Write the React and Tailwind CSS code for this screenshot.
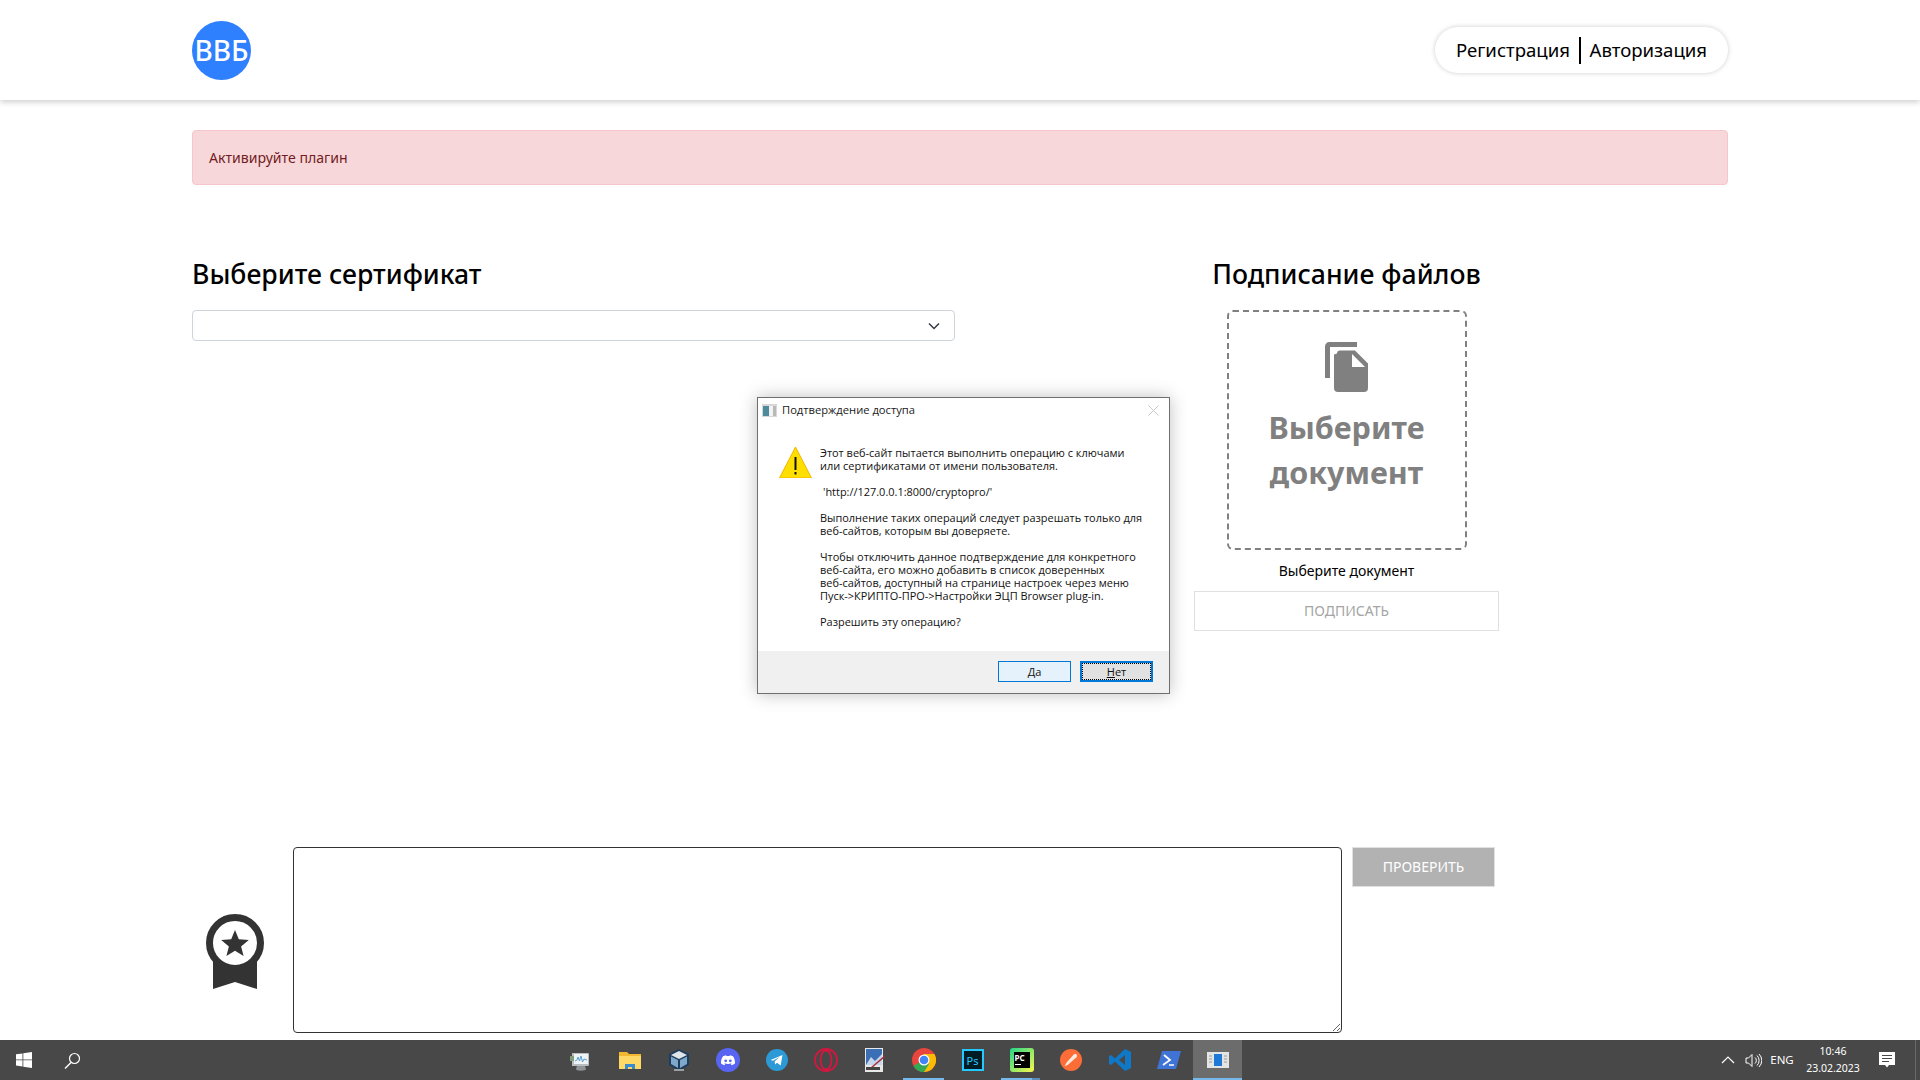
import React from "react";

const font = { fontFamily: '"Noto Sans", "Open Sans", sans-serif' };

function DocIcon() {
  return (
    <svg width="43" height="50" viewBox="0 0 43 50" className="block">
      <path d="M2.5 36V4.5a2 2 0 0 1 2-2H32" fill="none" stroke="#808080" strokeWidth="5" />
      <path d="M12 11.5a3 3 0 0 1 3-3h15L43 21.5V46a4 4 0 0 1-4 4H13a4 4 0 0 1-4-4V12.500z" fill="#808080" />
      <path d="M27 13V26H40z" fill="#fff" transform="translate(0,-1)" />
    </svg>
  );
}

function Badge() {
  return (
    <svg width="58" height="76" viewBox="0 0 58 76" className="block">
      <path d="M7 40V75L29 68L51 75V40z" fill="#333" />
      <circle cx="29" cy="29" r="25.500" fill="#fff" stroke="#333" strokeWidth="7" />
      <path d="M29 16l3.800 9.300 10 .7-7.700 6.400 2.500 9.700L29 36.800l-8.600 5.300 2.500-9.700-7.700-6.400 10-.7z" fill="#333" />
    </svg>
  );
}

function Tile({ active, bar, bar2, children }) {
  return (
    <div className={`relative w-[49px] shrink-0 h-10 flex items-center justify-center ${active ? "bg-[#6c6c6c]" : ""}`}>
      {children}
      {bar && <div className={`absolute bottom-0 h-[2px] bg-[#76b9ed] ${active ? "left-0 right-0" : bar2 ? "left-[4px] w-[31px]" : "left-[4px] w-[41px]"}`} />}
      {bar2 && <div className="absolute bottom-0 left-[35px] w-[8px] h-[2px] bg-[#5b8fb8]" />}
    </div>
  );
}

const S = ({ w = 24, h = 24, vb = "0 0 24 24", children }) => (
  <svg width={w} height={h} viewBox={vb} className="block">{children}</svg>
);

function Icons() {
  return (
    <div className="flex shrink-0 ml-[460px]">
      <Tile>
        <S>
          <path d="M3 5h16a1 1 0 0 1 1 1v11a1 1 0 0 1-1 1H3z" fill="#b9bdc0" />
          <rect x="5" y="6" width="14" height="10" fill="#eef3f6" />
          <path d="M6 13l2-1 1-3 1.500 4 1.500-5 1.500 6 1.500-3 3 1" fill="none" stroke="#5c9fd0" strokeWidth="1" />
          <path d="M8 18h8l1 3a3 1 0 0 1-10 0z" fill="#8e9396" />
          <rect x="1" y="8" width="4" height="5" fill="#7d9c77" />
        </S>
      </Tile>
      <Tile>
        <S>
          <path d="M1 4h8l2 2h12v15H1z" fill="#f2b930" />
          <rect x="1" y="8" width="22" height="13" fill="#ffd966" />
          <path d="M7 21v-5h10v5h-3v-2h-4v2z" fill="#3a8bd0" />
        </S>
      </Tile>
      <Tile>
        <S>
          <path d="M12 1l10 5v11l-10 6-10-6V6z" fill="#1f3c5c" />
          <path d="M12 3l8 4-8 4-8-4z" fill="#dfe5ea" />
          <path d="M4 8.500l7 3.500v8l-7-4zM20 8.500l-7 3.500v8l7-4z" fill="#7ea8cb" />
          <path d="M12 11v9" stroke="#1f3c5c" strokeWidth="2" />
          <rect x="7" y="21" width="10" height="2" fill="#9aa0a4" />
        </S>
      </Tile>
      <Tile>
        <S>
          <circle cx="12" cy="12" r="12" fill="#5865f2" />
          <path d="M7 8.200c1-.5 2-.8 3-1l.400.8c1-.1 2.200-.1 3.200 0l.400-.8c1 .2 2 .5 3 1 1.500 2.300 2.200 4.700 2 7.300-1.100.8-2.200 1.300-3.400 1.700l-.8-1.200.9-.5-.4-.3c-1.800.9-4.800.9-6.600 0l-.4.300.9.500-.8 1.200c-1.200-.4-2.300-.9-3.400-1.700-.2-2.600.5-5 2-7.300z" fill="#fff" />
          <circle cx="9.700" cy="12.800" r="1.400" fill="#5865f2" />
          <circle cx="14.300" cy="12.800" r="1.400" fill="#5865f2" />
        </S>
      </Tile>
      <Tile>
        <S w={22} h={22}>
          <circle cx="12" cy="12" r="12" fill="#2b9ad6" />
          <path d="M5 12l13-5.500-2 11.500-4-3-2 2-.6-3.500 5.600-5-7.200 4.300z" fill="#fff" />
        </S>
      </Tile>
      <Tile>
        <S>
          <ellipse cx="12" cy="12" rx="11" ry="11" fill="none" stroke="#d3173f" strokeWidth="1.800" />
          <ellipse cx="12" cy="12" rx="5.500" ry="9.500" fill="none" stroke="#d3173f" strokeWidth="1.800" />
        </S>
      </Tile>
      <Tile>
        <S w={20} h={24} vb="0 0 20 24">
          <rect width="18" height="24" fill="#e8e8e8" />
          <rect x="1" y="1" width="16" height="16" fill="#3b6fb5" />
          <path d="M1 17l5-8 4 4 7-7v11z" fill="#c6d6ea" />
          <path d="M20 8L6 20" stroke="#a52a3a" strokeWidth="1.500" />
          <rect x="1" y="19" width="14" height="3" fill="#444" />
        </S>
      </Tile>
      <Tile bar>
        <S>
          <circle cx="12" cy="12" r="12" fill="#e8453c" />
          <path d="M12 12L1.600 18A12 12 0 0 0 12 24h.5z" fill="#34a853" />
          <path d="M12 24A12 12 0 0 0 22.400 6H12z" fill="#fbbc05" />
          <path d="M12 12L1.600 18A12 12 0 0 0 12 24l5-8z" fill="#34a853" />
          <circle cx="12" cy="12" r="5.500" fill="#fff" />
          <circle cx="12" cy="12" r="4.300" fill="#4285f4" />
        </S>
      </Tile>
      <Tile>
        <div className="w-[22px] h-[22px] bg-[#001d26] border-2 border-[#26c9ff] flex items-center justify-center text-[11px] leading-none text-[#26c9ff]" style={font}>Ps</div>
      </Tile>
      <Tile bar bar2>
        <div className="relative w-[24px] h-[24px] bg-[linear-gradient(135deg,#21d789,#fcf84a)] rounded-[3px] flex items-center justify-center">
          <div className="w-[16px] h-[16px] bg-black text-white text-[8px] font-bold leading-[11px] pl-[1px]" style={font}>
            PC
            <div className="w-[6px] h-[1px] bg-white mt-[1px]" />
          </div>
        </div>
      </Tile>
      <Tile>
        <S w={22} h={22}>
          <circle cx="12" cy="12" r="12" fill="#fc6d38" />
          <path d="M5 19l2-4 8-9a2 2 0 0 1 3 3l-9 8z" fill="#ffe9dc" />
        </S>
      </Tile>
      <Tile>
        <S>
          <path d="M17 1l6 3v16l-6 3L7 13.500 3 17 1 16v-8l2-1 4 3.500zM17 7l-6 5 6 5z" fill="#0f78c8" fillRule="evenodd" />
        </S>
      </Tile>
      <Tile>
        <S vb="0 0 24 24">
          <path d="M5 3h19l-5 18H0z" fill="#3f74d6" />
          <path d="M7 7l6 5-7 5" fill="none" stroke="#fff" strokeWidth="1.800" />
          <path d="M12 17h5" stroke="#fff" strokeWidth="1.500" />
        </S>
      </Tile>
      <Tile active bar>
        <S w={22} h={16} vb="0 0 22 16">
          <rect width="22" height="16" fill="#e4e4e4" />
          <rect x="7" y="2" width="8" height="12" fill="#1e78d6" />
          <path d="M2 4h3M2 7h3M2 10h3M17 4h3M17 7h3M17 10h3" stroke="#9a9a9a" />
        </S>
      </Tile>
    </div>
  );
}

function Dialog() {
  const p = "mb-[13px] whitespace-pre";
  return (
    <div className="absolute left-[757px] top-[397px] w-[413px] h-[297px] bg-white border border-[#6f6f6f] shadow-[0_0_16px_rgba(0,0,0,0.25)] flex flex-col" style={{ fontFamily: '"Open Sans", "Noto Sans", sans-serif' }}>
      <div className="flex items-center h-[24px] pl-[4px] pr-[10px] text-[11.200px] text-[#1a1a1a]">
        <svg width="15" height="13" viewBox="0 0 15 13" className="mr-[5px]">
          <rect width="15" height="13" fill="#d8d8d8" />
          <rect x="1" y="2" width="6" height="10" fill="#4d8a9c" />
          <rect x="7" y="2" width="4" height="10" fill="#f2f2f2" />
          <rect x="11" y="2" width="3" height="10" fill="#b8b8b8" />
        </svg>
        <span>Подтверждение доступа</span>
        <svg width="11" height="11" viewBox="0 0 11 11" className="ml-auto">
          <path d="M.5.500l10 10M10.500.500l-10 10" stroke="#c9c9c9" />
        </svg>
      </div>
      <div className="flex flex-1">
        <div className="w-[62px] pl-[21px] pt-[24px]">
          <svg width="33" height="32" viewBox="0 0 33 32" className="block">
            <path d="M16.500 1L32.500 32H.5z" fill="#ffdf00" stroke="#f0b400" strokeWidth="1" />
            <rect x="15.500" y="11" width="2" height="13" fill="#111" />
            <rect x="15.500" y="26" width="2" height="2.500" fill="#111" />
          </svg>
        </div>
        <div className="pt-[24px] text-[10.950px] leading-[13px] text-[#111]">
          <p className={p}>{"Этот веб-сайт пытается выполнить операцию с ключами\nили сертификатами от имени пользователя."}</p>
          <p className={`${p} pl-[3px]`}>{"'http://127.0.0.1:8000/cryptopro/'"}</p>
          <p className={p}>{"Выполнение таких операций следует разрешать только для\nвеб-сайтов, которым вы доверяете."}</p>
          <p className={p}>{"Чтобы отключить данное подтверждение для конкретного\nвеб-сайта, его можно добавить в список доверенных\nвеб-сайтов, доступный на странице настроек через меню\nПуск->КРИПТО-ПРО->Настройки ЭЦП Browser plug-in."}</p>
          <p className={p}>Разрешить эту операцию?</p>
        </div>
      </div>
      <div className="h-[42px] bg-[#f0f0f0] flex justify-end items-start pt-[10px] pr-[16px] gap-[9px]">
        <button className="w-[73px] h-[21px] border border-[#0078d7] bg-[#e5f1fb] text-[11px] leading-none text-[#111]"><span className="underline">Д</span>а</button>
        <button className="w-[73px] h-[21px] border-2 border-[#0078d7] bg-[#e1e1e1] text-[11px] leading-none text-[#111] outline-1 outline-dotted outline-black -outline-offset-3"><span className="underline">Н</span>ет</button>
      </div>
    </div>
  );
}

export default function App() {
  return (
    <div className="relative h-[1080px] w-[1920px] overflow-hidden bg-white flex flex-col text-black" style={font}>
      <header className="h-[100px] shrink-0 px-[192px] flex items-center justify-between bg-white shadow-[0_2px_6px_rgba(0,0,0,0.2)]">
        <div className="w-[59px] h-[59px] rounded-full bg-[#2f80ff] flex items-center justify-center text-white text-[28px] font-medium">ВВБ</div>
        <nav className="h-[46px] w-[293px] rounded-[23px] bg-white shadow-[0_0_5px_rgba(0,0,0,0.2)] flex items-center justify-center text-[18.600px]">
          <span>Регистрация</span>
          <span className="w-[1.500px] h-[27px] bg-black mx-[9px]" />
          <span>Авторизация</span>
        </nav>
      </header>

      <main className="px-[192px] flex-1">
        <div className="mt-[30px] h-[55px] w-[1536px] rounded bg-[#f8d7da] border border-[#f5c6cb] flex items-center pl-[16px] text-[14.100px] text-[#721c24]">Активируйте плагин</div>

        <div className="flex mt-[70px] gap-[239px]">
          <div className="w-[763px]">
            <h2 className="text-[26.600px] leading-[38px] font-medium">Выберите сертификат</h2>
            <div className="mt-[17px] h-[31px] border border-[#ced4da] rounded flex items-center justify-end pr-[14px]">
              <svg width="12" height="8" viewBox="0 0 12 8"><path d="M1 1.500l5 5 5-5" fill="none" stroke="#343a40" strokeWidth="1.500" /></svg>
            </div>
          </div>
          <div className="w-[305px] flex flex-col items-center">
            <h2 className="text-[26.600px] leading-[38px] font-medium whitespace-nowrap">Подписание файлов</h2>
            <div className="mt-[17px] w-[240px] h-[240px] border-2 border-dashed border-[#808080] rounded-[6px] flex flex-col items-center pt-[30px]">
              <DocIcon />
              <div className="mt-[13px] text-[30.500px] leading-[45px] font-bold text-[#808080] text-center">Выберите<br />документ</div>
            </div>
            <div className="mt-[10px] text-[14px] leading-[22px]">Выберите документ</div>
            <button className="mt-[9px] w-[305px] h-[40px] pb-[2px] border border-[#e0e0e0] bg-white text-[14px] text-[#a5a5a5]">ПОДПИСАТЬ</button>
          </div>
        </div>

        <div className="flex mt-[216px]">
          <div className="w-[101px] pl-[14px] pt-[67px]"><Badge /></div>
          <textarea className="w-[1049px] h-[186px] border border-[#333] rounded" />
          <button className="ml-[10px] w-[143px] h-[40px] pb-[2px] bg-[#b2b2b2] border border-[#e0e0e0] text-white text-[14px]">ПРОВЕРИТЬ</button>
        </div>
      </main>

      <footer className="h-10 shrink-0 bg-[#484848] flex items-center text-white">
        <div className="w-[48px] shrink-0 h-10 flex items-center justify-center">
          <svg width="16" height="16" viewBox="0 0 16 16"><path d="M0 2.300L6.500 1.400V7.500H0zM7.300 1.300L16 0V7.500H7.300zM0 8.300H6.500V14.500L0 13.600zM7.300 8.300H16V16L7.300 14.700z" fill="#fff" /></svg>
        </div>
        <div className="w-[48px] shrink-0 h-10 flex items-center justify-center">
          <svg width="17" height="17" viewBox="0 0 17 17"><circle cx="10.500" cy="6.500" r="5" fill="none" stroke="#fff" strokeWidth="1.200" /><path d="M7 10.500L1 16.500" stroke="#fff" strokeWidth="1.400" /></svg>
        </div>
        <Icons />
        <div className="ml-[478px] w-[16px] shrink-0 flex justify-center">
          <svg width="14" height="8" viewBox="0 0 14 8"><path d="M1 7l6-6 6 6" fill="none" stroke="#fff" strokeWidth="1.200" /></svg>
        </div>
        <div className="ml-[8px] w-[18px] shrink-0 flex justify-center">
          <svg width="17" height="15" viewBox="0 0 17 15"><path d="M1 5h2.500L7 1.500v12L3.500 10H1zM10 4.500a4 4 0 0 1 0 6M12 2.500a7 7 0 0 1 0 10M14 1a9 9 0 0 1 0 13" fill="none" stroke="#fff" strokeWidth="1" /></svg>
        </div>
        <div className="ml-[8px] w-[24px] shrink-0 flex justify-center text-[11.500px]">ENG</div>
        <div className="ml-[8px] w-[62px] shrink-0 text-center text-[10.500px] leading-[17px]">
          <div>10:46</div>
          <div className="whitespace-nowrap">23.02.2023</div>
        </div>
        <div className="ml-[15px] w-[16px] shrink-0">
          <svg width="16" height="16" viewBox="0 0 16 16"><path d="M0 0H16V13H10L8 15.500 6 13H0z" fill="#fff" /><path d="M3 3.500H13M3 6.500H13M3 9.500H10" stroke="#484848" /></svg>
        </div>
        <div className="ml-[20px] w-px h-10 shrink-0 bg-[#6a6a6a]" />
      </footer>

      <Dialog />
    </div>
  );
}
